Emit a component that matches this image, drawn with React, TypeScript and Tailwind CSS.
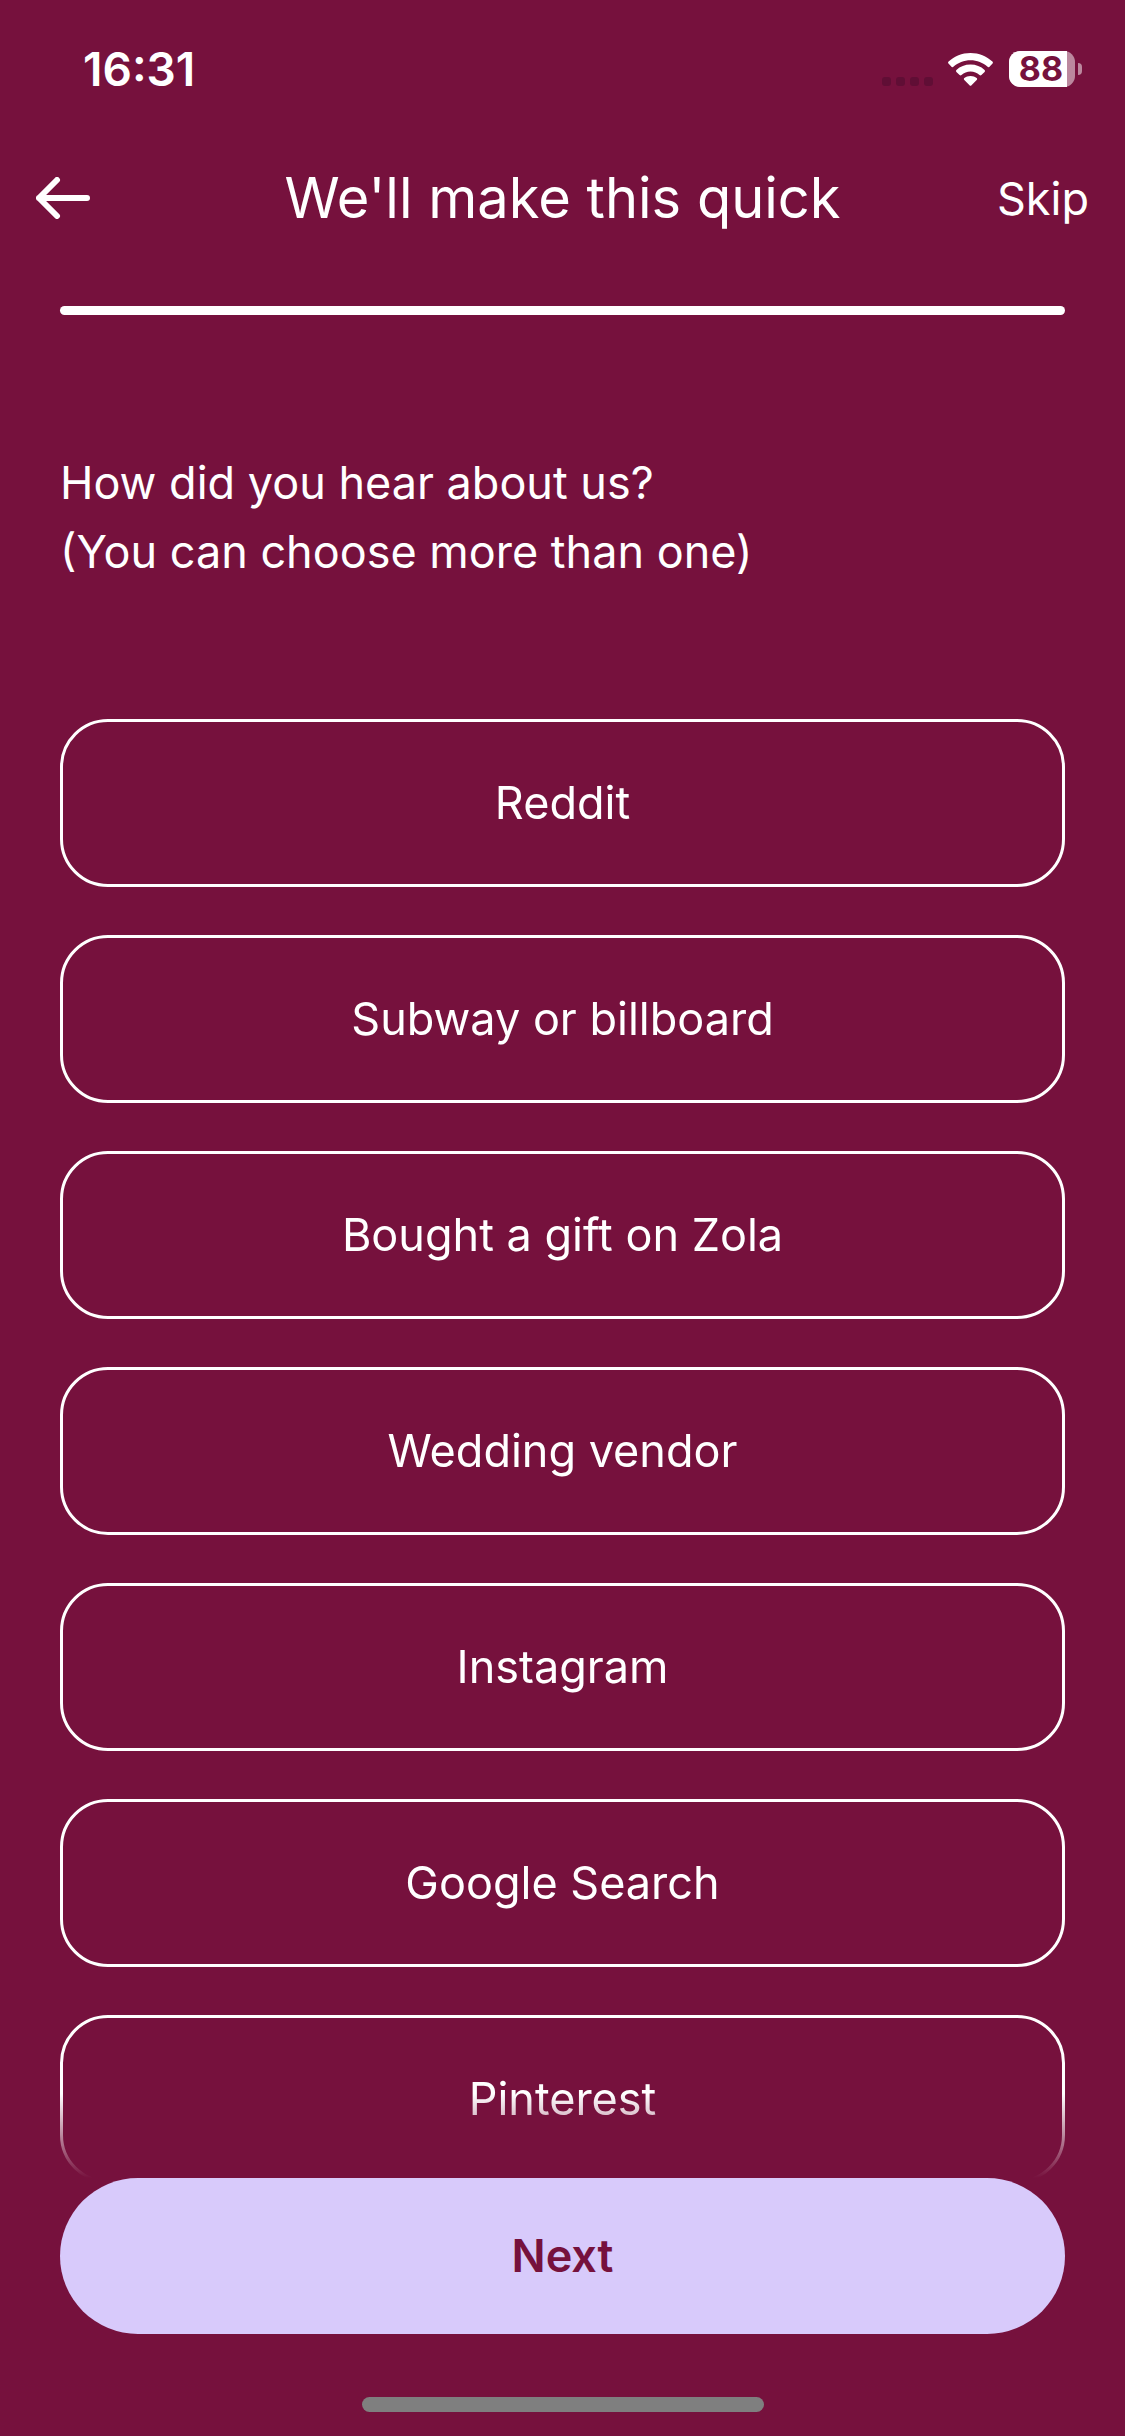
import { useState } from 'react';

const sources = [
  'Reddit',
  'Subway or billboard',
  'Bought a gift on Zola',
  'Wedding vendor',
  'Instagram',
  'Google Search',
  'Pinterest',
];

function WifiIcon() {
  return (
    <svg viewBox="0 0 45 33" className="w-[45px] h-[33px]" fill="#fff" aria-hidden="true">
      <path d="M22.5 0C31 0 38.600 3.300 44.400 8.600Q45.400 9.600 44.500 10.600L41.300 13.900Q40.500 14.600 39.600 13.800C35 9.600 29 7.200 22.500 7.200S10 9.600 5.400 13.800Q4.500 14.600 3.700 13.900L.5 10.600Q-.4 9.600.6 8.600C6.400 3.300 14 0 22.500 0Z" />
      <path d="M22.500 11.500C28 11.500 32.800 13.500 36.600 16.900Q37.500 17.900 36.600 18.900L33.400 22.100Q32.500 22.900 31.500 22.100C29 19.900 26 18.600 22.500 18.600S16 19.900 13.500 22.100Q12.500 22.900 11.600 22.100L8.400 18.900Q7.500 17.900 8.400 16.900C12.200 13.500 17 11.500 22.500 11.500Z" />
      <path d="M22.500 22.900C25 22.900 27.100 23.700 28.700 25.100Q29.600 26.100 28.700 27L23.500 32.200Q22.500 33.200 21.500 32.200L16.300 27Q15.400 26.100 16.300 25.100C17.900 23.700 20 22.900 22.500 22.900Z" />
    </svg>
  );
}

function Battery({ level }: { level: number }) {
  return (
    <div className="flex items-center gap-[3px]">
      <div className="relative w-[66px] h-9 rounded-[11px] bg-[#bb889e]">
        <div className="h-full rounded-l-[11px] bg-white" style={{ width: `${level}%` }} />
        <span className="absolute inset-0 pr-0.5 flex items-center justify-center text-[34px] leading-9 font-bold text-[#76113d]">
          {level}
        </span>
      </div>
      <div className="w-1 h-3 rounded-r-full bg-[#bb889e]" />
    </div>
  );
}

function StatusBar() {
  return (
    <div className="h-[138px] pl-[83px] pr-[43px] flex items-center justify-between">
      <span className="text-[46px] leading-none font-semibold">16:31</span>
      <div className="flex items-center">
        <div className="flex gap-[5px] mr-[15px] pt-6">
          {[0, 1, 2, 3].map((i) => (
            <span key={i} className="w-[9px] h-[9px] rounded-[3px] bg-[#600e35]" />
          ))}
        </div>
        <WifiIcon />
        <div className="ml-4">
          <Battery level={88} />
        </div>
      </div>
    </div>
  );
}

export default function App() {
  const [selected, setSelected] = useState<string[]>([]);

  const toggle = (source: string) =>
    setSelected((prev) => (prev.includes(source) ? prev.filter((s) => s !== source) : [...prev, source]));

  return (
    <div className="h-screen flex flex-col bg-[#76113d] text-white font-['Inter',sans-serif]">
      <StatusBar />

      <header className="h-[120px] px-9 grid grid-cols-[1fr_auto_1fr] items-center">
        <button type="button" aria-label="Back" className="justify-self-start">
          <svg viewBox="0 0 54 42" className="w-[54px] h-[42px]" fill="none" stroke="#fff" strokeWidth="6" strokeLinecap="round" strokeLinejoin="round">
            <path d="M51 21H3M21 3L3 21l18 18" />
          </svg>
        </button>
        <h1 className="text-[56px] leading-none">We'll make this quick</h1>
        <button type="button" className="justify-self-end text-[45px] leading-none">Skip</button>
      </header>

      <div
        role="progressbar"
        aria-label="Sign-up progress"
        aria-valuenow={100}
        className="mx-[60px] mt-12 h-[9px] shrink-0 rounded-full bg-white"
      />

      <p className="mx-[60px] mt-[133px] text-[45px] leading-[69px]">
        How did you hear about us?
        <br />
        (You can choose more than one)
      </p>

      {/* Options fade out above the footer button */}
      <div className="mt-[133px] px-[60px] flex-1 min-h-0 overflow-y-auto [scrollbar-width:none] [mask-image:linear-gradient(to_bottom,black_calc(100%-84px),transparent)]">
        <div className="flex flex-col gap-12">
          {sources.map((source) => (
            <button
              key={source}
              type="button"
              aria-pressed={selected.includes(source)}
              onClick={() => toggle(source)}
              className="h-[168px] shrink-0 rounded-[48px] border-3 border-white text-[45px] aria-pressed:bg-white/20"
            >
              {source}
            </button>
          ))}
        </div>
      </div>

      <footer className="px-[60px] pb-6 flex flex-col items-center">
        <button type="button" className="w-full h-[156px] rounded-full bg-[#d8cafb] text-[#76113d] text-[45px] font-semibold">
          Next
        </button>
        <div className="mt-[63px] w-2/5 h-[15px] rounded-full bg-[#7f7f7f]" />
      </footer>
    </div>
  );
}
